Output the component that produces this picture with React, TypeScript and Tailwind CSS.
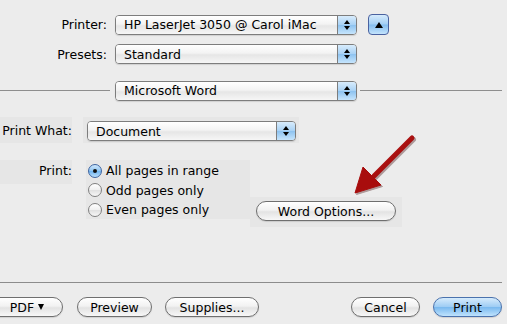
import React from "react";

/** Aqua 风格的下拉框 */
function PopUp({ label, width }: { label: string; width: string }) {
  return (
    <div
      className={`flex h-[20px] shrink-0 rounded-[4px] border border-[#7d7d7d] overflow-hidden shadow-[0_1px_1px_rgba(0,0,0,0.12)] ${width}`}
    >
      <div className="flex-1 flex items-center pl-[8px] text-black bg-[linear-gradient(#ffffff,#f3f3f3_45%,#e6e6e6_55%,#f6f6f6)]">
        {label}
      </div>
      <div className="w-[19px] border-l border-[#7d7d7d] flex flex-col items-center justify-center gap-[2px] bg-[linear-gradient(#d8ecfc,#a9d2f5_48%,#8ec3f0_52%,#c6e5fd)]">
        <div className="w-0 h-0 border-x-[3px] border-x-transparent border-b-[4px] border-b-black" />
        <div className="w-0 h-0 border-x-[3px] border-x-transparent border-t-[4px] border-t-black" />
      </div>
    </div>
  );
}

/** 胶囊按钮 */
function PillButton({ children, className, blue }: { children: React.ReactNode; className: string; blue?: boolean }) {
  const face = blue
    ? "border-[#4a72ad] bg-[linear-gradient(#d6ebfc,#9fcdf4_48%,#7ab9ef_52%,#bfe3fd)]"
    : "border-[#6f6f6f] bg-[linear-gradient(#ffffff,#f2f2f2_45%,#e3e3e3_55%,#f7f7f7)]";
  return (
    <div
      className={`h-[20px] shrink-0 rounded-full border flex items-center justify-center text-black shadow-[0_1px_1px_rgba(0,0,0,0.12)] ${face} ${className}`}
    >
      {children}
    </div>
  );
}

/** 单选按钮 */
function Radio({ label, checked }: { label: string; checked?: boolean }) {
  return (
    <div className="flex items-center h-[19.5px]">
      <div
        className={`ml-[2px] w-[14px] h-[14px] rounded-full border flex items-center justify-center ${
          checked
            ? "border-[#3e64a0] bg-[linear-gradient(#cfe7fc,#8ec4f1_50%,#6fb3ee_52%,#b9dffc)]"
            : "border-[#808080] bg-[linear-gradient(#ffffff,#f0f0f0_50%,#e0e0e0_52%,#f7f7f7)]"
        }`}
      >
        {checked && <div className="w-[4px] h-[4px] rounded-full bg-[#111]" />}
      </div>
      <span className="ml-[4px] text-black">{label}</span>
    </div>
  );
}

export default function App() {
  return (
    <div className="relative w-[507px] h-[324px] overflow-hidden bg-[#ececec] text-black font-['DejaVu_Sans',sans-serif] text-[12.5px] leading-[15px] flex flex-col">
      {/* 打印机 */}
      <div className="flex items-center mt-[14px] h-[21px]">
        <div className="w-[107px] text-right">Printer:</div>
        <PopUp label="HP LaserJet 3050 @ Carol iMac" width="ml-[8px] w-[242px]" />
        <div className="ml-[11px] w-[21px] h-[21px] rounded-[4px] border border-[#4a62a0] flex items-center justify-center bg-[linear-gradient(#d6ebfc,#a3cff5_48%,#84bdef_52%,#c4e4fd)]">
          <div className="w-0 h-0 border-x-[4px] border-x-transparent border-b-[6px] border-b-black" />
        </div>
      </div>

      {/* 预设 */}
      <div className="flex items-center mt-[9px] h-[20px]">
        <div className="w-[107px] text-right">Presets:</div>
        <PopUp label="Standard" width="ml-[8px] w-[242px]" />
      </div>

      {/* 分组 */}
      <div className="flex items-center mt-[16px] h-[21px]">
        <div className="w-[110px] h-px bg-[#8e8e8e]" />
        <PopUp label="Microsoft Word" width="ml-[5px] w-[242px]" />
        <div className="ml-[3px] mr-[5px] flex-1 h-px bg-[#8e8e8e]" />
      </div>

      {/* 打印内容 */}
      <div className="flex mt-[16px] h-[26px]">
        <div className="w-[72px] bg-[#e6e6e6] flex items-center justify-end">Print What:</div>
        <div className="ml-[11px] w-[216px] bg-[#e6e6e6] pl-[4px] pt-[4px]">
          <PopUp label="Document" width="w-[209px]" />
        </div>
      </div>

      {/* 打印范围 */}
      <div className="flex items-start mt-[17px]">
        <div className="w-[72px] h-[24px] bg-[#e6e6e6] text-right pt-[3px]">Print:</div>
        <div className="ml-[14px] w-[164px] h-[59px] bg-[#e6e6e6] pt-[1px]">
          <Radio label="All pages in range" checked />
          <Radio label="Odd pages only" />
          <Radio label="Even pages only" />
        </div>
        <div className="mt-[37px] w-[152px] h-[30px] bg-[#e6e6e6] pl-[6px] pt-[4px]">
          <PillButton className="w-[140px]">Word Options...</PillButton>
        </div>
      </div>

      {/* 底部 */}
      <div className="mt-auto w-[502px] h-px bg-[#8c8c8c]" />
      <div className="flex items-center mt-[14px] mb-[7px]">
        <PillButton className="ml-[-12px] w-[75px]">
          <span className="ml-[3px]">PDF</span>
          <span className="ml-[4px] w-0 h-0 border-x-[3.5px] border-x-transparent border-t-[6px] border-t-black" />
        </PillButton>
        <PillButton className="ml-[14px] w-[75px]">Preview</PillButton>
        <PillButton className="ml-[13px] w-[94px]">Supplies...</PillButton>
        <PillButton className="ml-[92px] w-[69px]">Cancel</PillButton>
        <PillButton className="ml-[13px] w-[69px]" blue>
          Print
        </PillButton>
      </div>

      {/* 红色标注箭头 */}
      <svg className="absolute left-[350px] top-[134px]" width="70" height="66" viewBox="0 0 70 66">
        <g transform="translate(1.5,1.5)" fill="#3a0000" opacity="0.35" stroke="#3a0000">
          <line x1="62" y1="4" x2="24" y2="42" strokeWidth="5" strokeLinecap="round" />
          <polygon points="13,33 31,51 5,59" strokeWidth="1" />
        </g>
        <defs>
          <linearGradient id="rg" x1="0" y1="0" x2="1" y2="1">
            <stop offset="0" stopColor="#c41a1a" />
            <stop offset="1" stopColor="#8e0606" />
          </linearGradient>
        </defs>
        <line x1="62" y1="4" x2="24" y2="42" stroke="url(#rg)" strokeWidth="5" strokeLinecap="round" />
        <polygon points="13,33 31,51 5,59" fill="#a80d0d" stroke="#a80d0d" strokeWidth="1" strokeLinejoin="round" />
      </svg>
    </div>
  );
}
